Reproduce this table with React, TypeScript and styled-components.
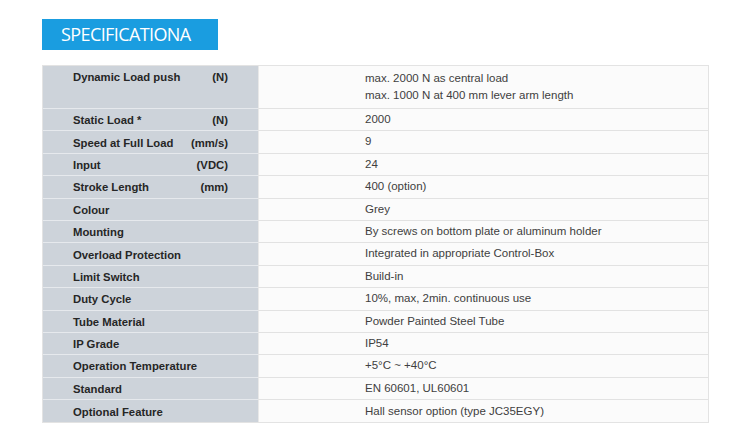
import React from "react";
import styled, { createGlobalStyle } from "styled-components";

const Global = createGlobalStyle`
  html, body { margin: 0; padding: 0; background: #ffffff; }
  body { font-family: "Liberation Sans", Arial, sans-serif; }
`;

const Page = styled.div`
  width: 750px;
  height: 444px;
  box-sizing: border-box;
  padding: 19px 0 0 42px;
  display: flex;
  flex-direction: column;
  align-items: flex-start;
`;

const Heading = styled.div`
  width: 176px;
  height: 31px;
  box-sizing: border-box;
  background: #1a9de0;
  color: #ffffff;
  font-family: "Open Sans", sans-serif;
  font-size: 18px;
  line-height: 31px;
  padding-left: 19px;
  letter-spacing: -0.6px;
`;

const Table = styled.div`
  margin-top: 15px;
  width: 667px;
  box-sizing: border-box;
  border: 1px solid #e3e3e3;
  display: grid;
  grid-template-columns: 215px 1fr;
`;

const LabelCell = styled.div<{ $tall?: boolean; $last?: boolean }>`
  background: #cdd3da;
  height: ${(p) => (p.$tall ? "43px" : "22.4px")};
  box-sizing: border-box;
  border-bottom: ${(p) => (p.$last ? "none" : "1px solid #e6e9ed")};
  padding: ${(p) => (p.$tall ? "2px" : "1px")} 30px 0 30px;
  display: flex;
  align-items: ${(p) => (p.$tall ? "flex-start" : "center")};
  justify-content: space-between;
  font-weight: bold;
  font-size: 11.3px;
  line-height: 18px;
  color: #262626;
`;

const ValueCell = styled.div<{ $tall?: boolean; $last?: boolean }>`
  background: #fbfbfb;
  height: ${(p) => (p.$tall ? "43px" : "22.4px")};
  box-sizing: border-box;
  border-bottom: ${(p) => (p.$last ? "none" : "1px solid #e2e2e2")};
  border-left: 1px solid #e8e8e8;
  padding: ${(p) => (p.$tall ? "4px" : "0")} 0 0 106px;
  display: flex;
  flex-direction: column;
  justify-content: ${(p) => (p.$tall ? "flex-start" : "center")};
  font-size: 11.5px;
  line-height: 17.4px;
  color: #404040;
`;

const rows: { name: string; unit?: string; value: string[] }[] = [
  { name: "Dynamic Load push", unit: "(N)", value: ["max. 2000 N as central load", "max. 1000 N at 400 mm lever arm length"] },
  { name: "Static Load *", unit: "(N)", value: ["2000"] },
  { name: "Speed at Full Load", unit: "(mm/s)", value: ["9"] },
  { name: "Input", unit: "(VDC)", value: ["24"] },
  { name: "Stroke Length", unit: "(mm)", value: ["400 (option)"] },
  { name: "Colour", value: ["Grey"] },
  { name: "Mounting", value: ["By screws on bottom plate or aluminum holder"] },
  { name: "Overload Protection", value: ["Integrated in appropriate Control-Box"] },
  { name: "Limit Switch", value: ["Build-in"] },
  { name: "Duty Cycle", value: ["10%, max, 2min. continuous use"] },
  { name: "Tube Material", value: ["Powder Painted Steel Tube"] },
  { name: "IP Grade", value: ["IP54"] },
  { name: "Operation Temperature", value: ["+5°C ~ +40°C"] },
  { name: "Standard", value: ["EN 60601, UL60601"] },
  { name: "Optional Feature", value: ["Hall sensor option (type JC35EGY)"] },
];

export default function App() {
  return (
    <>
      <Global />
      <Page>
        <Heading>SPECIFICATIONA</Heading>
        <Table>
          {rows.map((r, i) => {
            const tall = r.value.length > 1;
            const last = i === rows.length - 1;
            return (
              <React.Fragment key={r.name}>
                <LabelCell $tall={tall} $last={last}>
                  <span>{r.name}</span>
                  {r.unit && <span>{r.unit}</span>}
                </LabelCell>
                <ValueCell $tall={tall} $last={last}>
                  {r.value.map((v) => (
                    <span key={v}>{v}</span>
                  ))}
                </ValueCell>
              </React.Fragment>
            );
          })}
        </Table>
      </Page>
    </>
  );
}
